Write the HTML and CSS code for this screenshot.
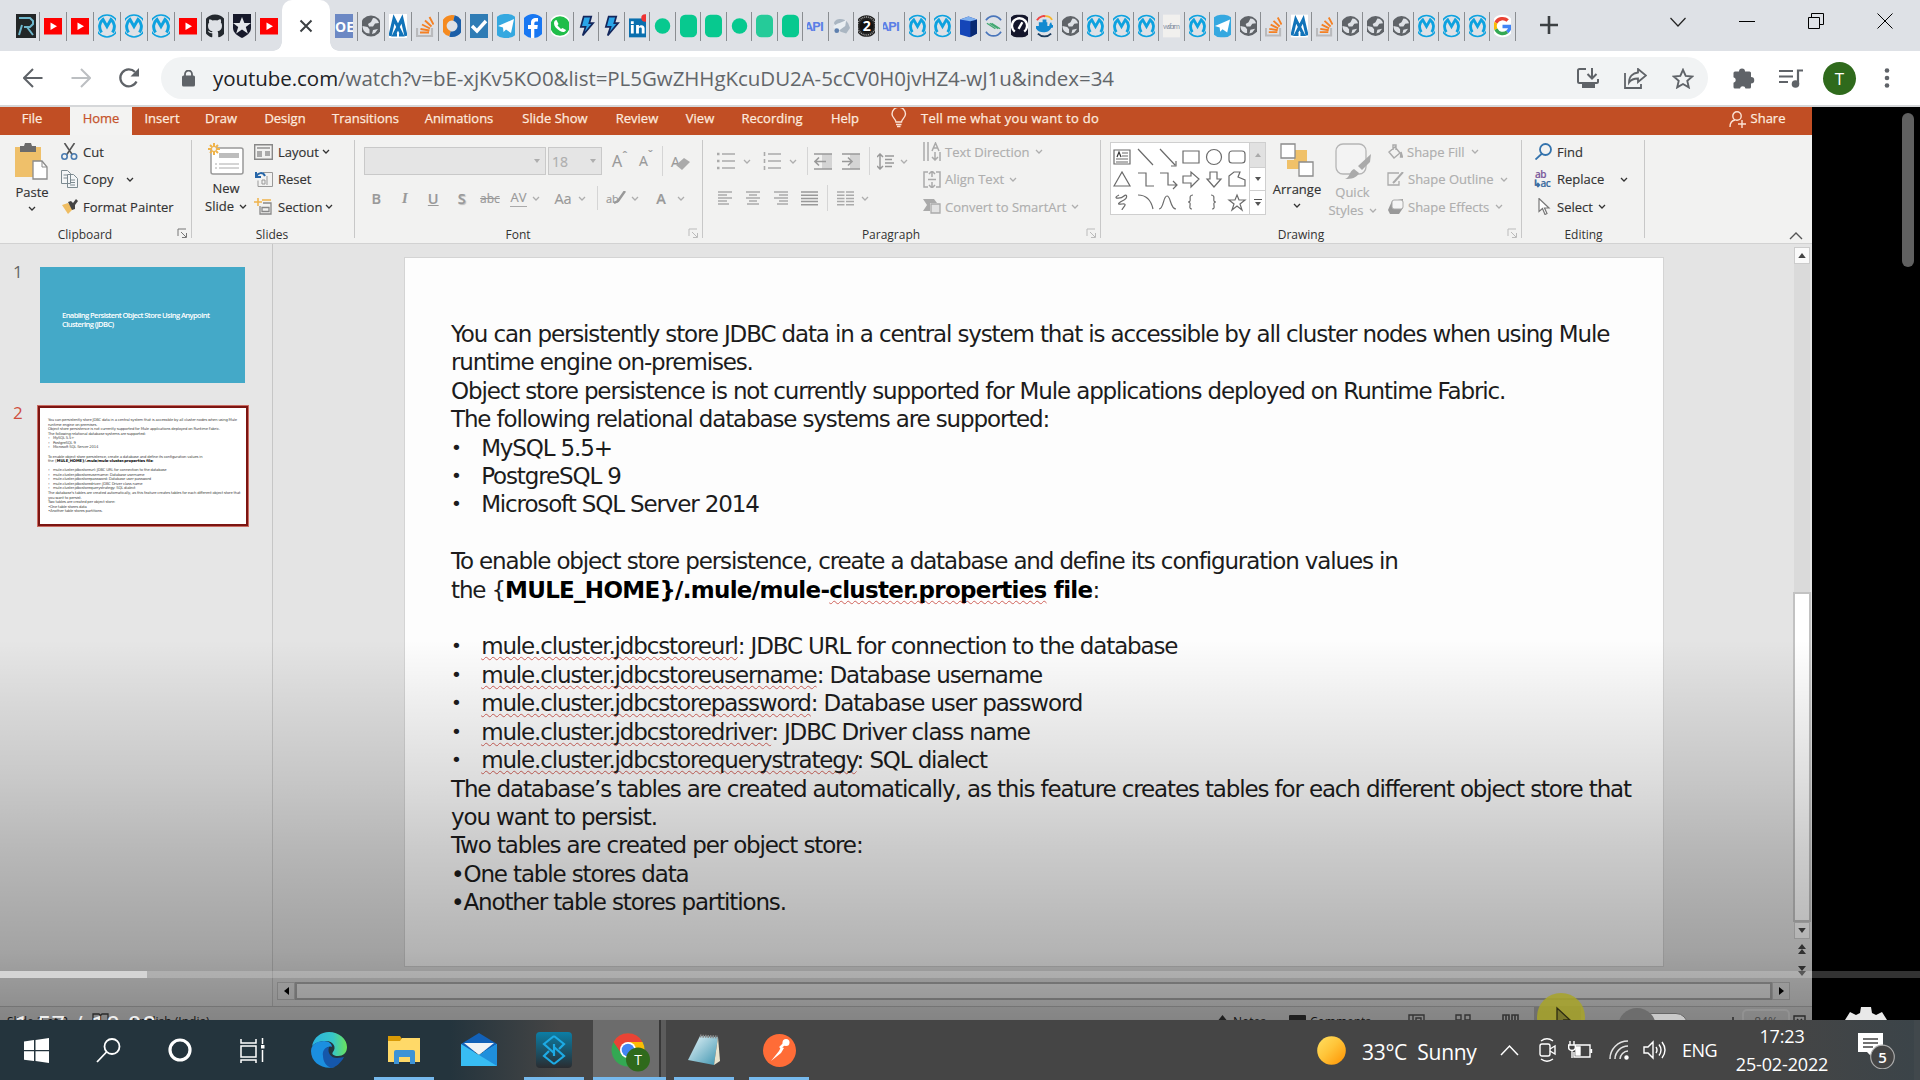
FILE: index.html
```html
<!DOCTYPE html>
<html lang="en">
<head>
<meta charset="utf-8">
<title>youtube.com</title>
<link rel="stylesheet" href="styles.css">
</head>
<body>
<svg class="defs" width="0" height="0">
  <defs>
    <linearGradient id="gEdge" x1="0" y1="0" x2="1" y2="0"><stop offset="0" stop-color="#2bb3e0"/><stop offset=".6" stop-color="#37c6c8"/><stop offset="1" stop-color="#6be35a"/></linearGradient>
    <linearGradient id="gSun" x1="0" y1="0" x2="1" y2="1"><stop offset="0" stop-color="#ffe063"/><stop offset=".45" stop-color="#ffc53a"/><stop offset="1" stop-color="#ff9100"/></linearGradient>
    <linearGradient id="gApp" x1="0" y1="0" x2="0" y2="1"><stop offset="0" stop-color="#0b7ea6"/><stop offset="1" stop-color="#2a2c30"/></linearGradient>
    <linearGradient id="gPad" x1="0" y1="0" x2="1" y2="1"><stop offset="0" stop-color="#e8f6fa"/><stop offset="1" stop-color="#3f95b0"/></linearGradient>
    <g id="rr"><path fill="#222627" d="M2 0h20v24H2z"/><path d="M5 4h11l3 3v3l-3 3h-6M13 13l6 8M5 21l3-10" fill="none" stroke="#6fb7cc" stroke-width="2"/></g>
    <g id="yt"><rect x="1" y="4" width="22" height="16.500" rx="2" fill="#f00"/><path fill="#fff" d="M9.500 8.500v7.500l6.500-3.700z"/></g>
    <g id="mu" fill="none" stroke="#0ea2df"><circle cx="12" cy="12" r="11" stroke-width="1.600"/><path stroke-width="3" d="M6.500 18.500C3.500 14 4.200 8.500 8 5.500l4 7 4-7c3.800 3 4.500 8.500 1.500 13"/></g>
    <g id="gh"><path fill="#24292f" d="M12 .5C5.500.500.500 5.700.500 12.200c0 5.200 3.300 9.500 8 11 .7.100.8-.3.800-.7v-3.300c-2.300.4-3.700-.6-4.300-2.400 1.700.2 2.100 1.500 3.200 1.500.7 0 1.100-.3 1.300-1C6.500 16.800 5 15 5 11.700c0-1.300.4-2.300 1.200-3.100-.4-1-.3-2.500.2-3.400 1.300 0 2.600.8 3.300 1.300 1.500-.4 3.100-.4 4.600 0 .9-.6 2-1.300 3.300-1.300.5 1 .6 2.400.2 3.400.8.800 1.200 1.800 1.200 3.100 0 3.300-1.600 5.100-4.500 5.600.5.500.7 1.200.7 2.200v3c0 .4.200.8.800.7 4.700-1.500 8-5.800 8-11C24 5.700 18.500.500 12 .5z"/></g>
    <g id="au"><path fill="#16192a" d="M3 0h18v14c0 5-5 8-9 10-4-2-9-5-9-10z"/><path fill="#e3e6ea" d="M12 3l2.400 6H21l-5.200 4 2 6.500L12 15.500 6.200 19.500l2-6.500L3 9h6.600z"/></g>
    <g id="oe"><path fill="#6c88c4" d="M0 0h24v24H0z"/><text x="3" y="17.500" font-family="Open Sans" font-weight="700" font-size="14" fill="#fff">OE</text></g>
    <g id="gl"><circle cx="12" cy="12" r="10.500" fill="#5f6368"/><path fill="#dee1e6" d="M14 4c3 0 5 2 6 5l-4 .5-2 3h-4l-1-2.500 3-2zM3.500 12l5 1 2 2.500v4C6 19.500 3.500 16 3.500 12zM14 16l5-1-3 4-3 1z"/></g>
    <g id="mm"><path fill="#fff" d="M2 0h20v24H2z"/><path fill="none" stroke="#1173b9" stroke-width="3.200" d="M4 22L8 5l8 16h-3M20 22L16 5 8 21h3"/></g>
    <g id="so" fill="none"><path d="M4 14v8h15v-8" stroke="#b9babd" stroke-width="2.200"/><path d="M7 18.500h9M7.500 15l9 1.500M9 10.500l8 4M12 6.500l6.500 6M16.500 3l4 7.500" stroke="#f48024" stroke-width="1.900"/></g>
    <g id="sw" fill="none" stroke-width="5.500"><path d="M14 4A8 8 0 0 0 10 19.700" stroke="#f58a1f"/><path d="M10 20A8 8 0 0 0 14 4" stroke="#1c5fa8"/></g>
    <g id="ck"><path fill="#2f7cb5" d="M0 0h24v24H0z"/><path d="M5 12l5 5 9-10" fill="none" stroke="#fff" stroke-width="3.400"/></g>
    <g id="tg"><rect width="24" height="24" rx="10" fill="#35a8e0"/><path fill="#fff" d="M4 12L20 5l-3 14-5-3.500-2.500 2.500-.5-4.500z"/></g>
    <g id="fb"><circle cx="12" cy="12" r="12" fill="#1877f2"/><path fill="#fff" d="M10 24v-9H7v-4h3V9c0-4 2-5.500 7-5v3.500h-2c-1.500 0-1.700.7-1.700 3.500h3.500l-.5 4h-3v9z"/></g>
    <g id="wa"><circle cx="12" cy="12" r="10.500" fill="#1fbd49" stroke="#fff" stroke-width="1.500"/><path fill="#fff" d="M8.500 6l2 4-1 1.500 3.500 3.500 1.500-1 3.500 2c-1 2.500-3.500 2.500-6 1-3.500-2-6-5-6-7.500 0-2 1-3.500 2.500-3.500z"/></g>
    <g id="bo"><path fill="#2aa5e8" stroke="#14275c" stroke-width="1.800" d="M9 2h8l-2 7h4L8 22l3-9H6z"/></g>
    <g id="li"><path fill="#0a6fae" d="M0 4h22v20H0z"/><path fill="#fff" d="M5 11h3v9H5zM5 7h3v3H5zM10.500 11h3v1.500c2-2.500 6-1.500 6 2V20h-3v-5c0-2-3-2-3 0v5h-3z"/><circle cx="20" cy="3.500" r="4" fill="#e33"/></g>
    <g id="gd"><circle cx="12" cy="12" r="8.200" fill="#07c98f"/></g>
    <g id="gb"><rect x="3" width="18" height="24" rx="5.500" fill="#07c98f"/></g>
    <g id="gc"><rect x="3" width="18" height="24" rx="5.500" fill="#25cb99"/></g>
    <g id="ap"><text x="0" y="17" font-family="Roboto" font-weight="700" font-size="14" textLength="21" fill="#5b7fe6">API</text></g>
    <g id="cl"><path fill="#aab6c2" d="M4 9c1-6 12-6 15 0l2 5-4 6-6-2z"/><path fill="#e9eef2" d="M3 13c4-5 10-4 14-8l-1 7-7 5z"/><circle cx="7" cy="17" r="2.500" fill="#5d7fae"/></g>
    <g id="tw"><circle cx="12" cy="12" r="11.500" fill="#222"/><circle cx="12" cy="12" r="9.500" fill="none" stroke="#aaa" stroke-width="1.500" stroke-dasharray="1 1"/><circle cx="12" cy="12" r="7" fill="#111"/><text x="8" y="17.500" font-family="Open Sans" font-weight="700" font-size="15" fill="#fff">2</text></g>
    <g id="cu"><path fill="#1546b8" d="M3 5l9-3 9 3v15l-8 4-10-3z"/><path fill="#0a2a72" d="M14 7l7-2v15l-7 4z"/><path fill="#7fb0ee" d="M3 5l9-3 9 3-7 2z"/></g>
    <g id="sc" fill="none" stroke-width="1.800"><path stroke="#4a76bb" d="M4 6C8 0 16 0 20 6M4 18c4 6 12 6 16 0"/><path stroke="#42a871" stroke-width="1.300" d="M5 9l9 6M10 9l9 6M8 9l9 6"/></g>
    <g id="sp"><rect x="1" width="22" height="24" rx="8" fill="#14162b"/><path d="M7 18a8 8 0 1 1 10 0M11 15l4-7" fill="none" stroke="#fff" stroke-width="2.500"/></g>
    <g id="dk"><path d="M4 6C7 1 12 1 13 2" stroke="#e44" stroke-width="2" fill="none"/><path d="M13 1.500c4 0 6 2 7 4" stroke="#f8b62b" stroke-width="2" fill="none"/><path fill="#1389d0" d="M2 12h15c0-3 2-4 2-4l1 3h3c-1 3-3 3-4 3-2 6-15 7-17-2zM6 8h9v4H6zM10 5h4v3h-4z"/><path d="M5 20c4 4 10 4 14 0" stroke="#1b3b5c" stroke-width="2" fill="none"/></g>
    <g id="ws"><path fill="#f1f0ee" d="M3 0h18v24H3z"/><text x="3" y="15" font-family="Lato" font-size="8" textLength="18" fill="#8b96a8">wsform</text></g>
    <g id="gg"><circle cx="12" cy="12" r="12" fill="#fff"/><g fill="none" stroke-width="3.600"><path stroke="#ea4335" d="M5 8.500A8 8 0 0 1 17.500 6.300"/><path stroke="#fbbc05" d="M5 15.500a8 8 0 0 1 0-7"/><path stroke="#34a853" d="M17 18.300A8 8 0 0 1 5 15.500"/><path stroke="#4285f4" d="M12 12.500h8a8 8 0 0 1-3 5.800"/></g></g>
    <g id="chev"><path d="M1 1l3 3 3-3" fill="none" stroke="currentColor" stroke-width="1.300"/></g>
    <g id="launch" fill="none" stroke="currentColor"><path d="M1 8V1h8M4 4l5 5M9.500 5v4.500H5"/></g>
  </defs>
</svg>

<header class="tabstrip">
  <div class="tabs lead">
    <i><svg viewBox="2 0 20 24"><use href="#rr"/></svg></i><i><svg viewBox="3 0 18 24"><use href="#yt"/></svg></i><i><svg viewBox="3 0 18 24"><use href="#yt"/></svg></i><i><svg viewBox="3 0 18 24"><use href="#mu"/></svg></i><i><svg viewBox="3 0 18 24"><use href="#mu"/></svg></i><i><svg viewBox="3 0 18 24"><use href="#mu"/></svg></i><i><svg viewBox="3 0 18 24"><use href="#yt"/></svg></i><i><svg viewBox="3 0 18 24"><use href="#gh"/></svg></i><i><svg viewBox="3 0 18 24"><use href="#au"/></svg></i><i class="plain"><svg viewBox="3 0 18 24"><use href="#yt"/></svg></i>
  </div>
  <div class="active"><svg width="14" height="14" viewBox="0 0 14 14"><path d="M1.500 1.500l11 11M12.500 1.500l-11 11" stroke="#3c4043" stroke-width="2"/></svg></div>
  <div class="tabs mid">
    <i><svg viewBox="3 0 18 24"><use href="#oe"/></svg></i><i><svg viewBox="3 0 18 24"><use href="#gl"/></svg></i><i><svg viewBox="3 0 18 24"><use href="#mm"/></svg></i><i><svg viewBox="3 0 18 24"><use href="#so"/></svg></i><i><svg viewBox="3 0 18 24"><use href="#sw"/></svg></i><i><svg viewBox="3 0 18 24"><use href="#ck"/></svg></i><i><svg viewBox="3 0 18 24"><use href="#tg"/></svg></i><i><svg viewBox="3 0 18 24"><use href="#fb"/></svg></i><i><svg viewBox="3 0 18 24"><use href="#wa"/></svg></i>
  </div>
  <div class="tabs tail">
    <i><svg viewBox="3 0 18 24"><use href="#bo"/></svg></i><i><svg viewBox="3 0 18 24"><use href="#bo"/></svg></i><i><svg viewBox="3 0 18 24"><use href="#li"/></svg></i><i><svg viewBox="3 0 18 24"><use href="#gd"/></svg></i><i><svg viewBox="3 0 18 24"><use href="#gb"/></svg></i><i><svg viewBox="3 0 18 24"><use href="#gb"/></svg></i><i><svg viewBox="3 0 18 24"><use href="#gd"/></svg></i><i><svg viewBox="3 0 18 24"><use href="#gc"/></svg></i><i><svg viewBox="3 0 18 24"><use href="#gb"/></svg></i><i><svg viewBox="3 0 18 24"><use href="#ap"/></svg></i><i><svg viewBox="3 0 18 24"><use href="#cl"/></svg></i><i><svg viewBox="3 0 18 24"><use href="#tw"/></svg></i><i><svg viewBox="3 0 18 24"><use href="#ap"/></svg></i><i><svg viewBox="3 0 18 24"><use href="#mu"/></svg></i><i><svg viewBox="3 0 18 24"><use href="#mu"/></svg></i><i><svg viewBox="3 0 18 24"><use href="#cu"/></svg></i><i><svg viewBox="3 0 18 24"><use href="#sc"/></svg></i><i><svg viewBox="3 0 18 24"><use href="#sp"/></svg></i><i><svg viewBox="3 0 18 24"><use href="#dk"/></svg></i><i><svg viewBox="3 0 18 24"><use href="#gl"/></svg></i><i><svg viewBox="3 0 18 24"><use href="#mu"/></svg></i><i><svg viewBox="3 0 18 24"><use href="#mu"/></svg></i><i><svg viewBox="3 0 18 24"><use href="#mu"/></svg></i><i><svg viewBox="3 0 18 24"><use href="#ws"/></svg></i><i><svg viewBox="3 0 18 24"><use href="#mu"/></svg></i><i><svg viewBox="3 0 18 24"><use href="#tg"/></svg></i><i><svg viewBox="3 0 18 24"><use href="#gl"/></svg></i><i><svg viewBox="3 0 18 24"><use href="#so"/></svg></i><i><svg viewBox="3 0 18 24"><use href="#mm"/></svg></i><i><svg viewBox="3 0 18 24"><use href="#so"/></svg></i><i><svg viewBox="3 0 18 24"><use href="#gl"/></svg></i><i><svg viewBox="3 0 18 24"><use href="#gl"/></svg></i><i><svg viewBox="3 0 18 24"><use href="#gl"/></svg></i><i><svg viewBox="3 0 18 24"><use href="#mu"/></svg></i><i><svg viewBox="3 0 18 24"><use href="#mu"/></svg></i><i><svg viewBox="3 0 18 24"><use href="#mu"/></svg></i><i><svg viewBox="3 0 18 24"><use href="#gg"/></svg></i>
  </div>
  <svg class="plus" width="18" height="18" viewBox="0 0 18 18"><path d="M9 0v18M0 9h18" stroke="#3c4043" stroke-width="2.600"/></svg>
  <div class="winbtns">
    <svg width="16" height="10" viewBox="0 0 16 10"><path d="M.500 1L8 9l7.500-8" fill="none" stroke="#222" stroke-width="1.200"/></svg>
    <svg width="16" height="16" viewBox="0 0 16 16"><path d="M0 8.500h16" stroke="#000"/></svg>
    <svg width="16" height="16" viewBox="0 0 16 16" fill="none" stroke="#000"><path d="M.500 4.500h11v11H.500zM3.500 4.500v-4h12v11h-4"/></svg>
    <svg width="16" height="16" viewBox="0 0 16 16"><path d="M.500.500l15 15M15.500.500l-15 15" stroke="#000"/></svg>
  </div>
</header>

<nav class="toolbar">
  <svg width="20" height="20" viewBox="0 0 20 20" fill="none" stroke="#5f6368" stroke-width="2"><path d="M19.500 10H1.500M10 1L1 10l9 9"/></svg>
  <svg width="20" height="20" viewBox="0 0 20 20" fill="none" stroke="#bcbfc2" stroke-width="2"><path d="M.500 10h18M10 1l9 9-9 9"/></svg>
  <svg width="22" height="22" viewBox="0 0 22 22"><path d="M18.500 14.500A8.500 8.500 0 1 1 17 5" fill="none" stroke="#5f6368" stroke-width="2.300"/><path d="M21 1v8.500h-8.500z" fill="#5f6368"/></svg>
  <div class="omnibox">
    <svg width="13" height="17" viewBox="0 0 13 17"><rect y="5.500" width="13" height="11" rx="1.500" fill="#5f6368"/><path d="M3 7V4a3.500 3.500 0 0 1 7 0v3" fill="none" stroke="#5f6368" stroke-width="1.800"/></svg>
    <span class="url"><b>youtube.com</b>/watch?v=bE-xjKv5KO0&amp;list=PL5GwZHHgKcuDU2A-5cCV0H0jvHZ4-wJ1u&amp;index=34</span>
    <div class="omni-actions">
      <svg width="22" height="20" viewBox="0 0 22 20" fill="none" stroke="#5f6368" stroke-width="2"><path d="M9 1H2.500Q1 1 1 2.500v11Q1 15 2.500 15h17q1.500 0 1.500-1.500V11M15 0v9M10.500 6l4.500 4.500L19.500 6"/><path d="M5 15h13v5H5z" fill="#5f6368" stroke="none"/></svg>
      <svg width="23" height="21" viewBox="0 0 23 21" fill="none" stroke="#5f6368" stroke-width="1.800"><path d="M1 5v15h16v-4M14 1l8 6.500-8 6.500v-3.500c-4 0-7 1-9 4 0-6 4-9.500 9-10z"/></svg>
      <svg width="22" height="21" viewBox="0 0 22 21" fill="none" stroke="#5f6368" stroke-width="1.900"><path d="M11 1.800l2.700 6.100 6.600.6-5 4.400 1.500 6.500-5.800-3.400-5.800 3.400 1.500-6.500-5-4.400 6.600-.6z"/></svg>
    </div>
  </div>
  <div class="ext">
    <svg width="22" height="22" viewBox="0 0 22 22" fill="#5f6368"><path d="M6 4.500a3 3 0 0 1 6 0h4.500q1.500 0 1.500 1.500v4a3 3 0 0 1 0 6.500V20q0 1.500-1.500 1.500h-4a2.800 2.800 0 0 0-5.500 0H2Q.500 21.500.500 20v-4.300a2.800 2.800 0 0 0 0-5.500V6Q.500 4.500 2 4.500z"/></svg>
    <svg width="24" height="19" viewBox="0 0 24 19"><path d="M0 2h14M0 7.500h14M0 13h9M19 15V1.500h5" fill="none" stroke="#5f6368" stroke-width="2.200"/><circle cx="16.500" cy="15" r="3.800" fill="#5f6368"/></svg>
    <span class="avatar">T</span>
    <svg width="6" height="20" viewBox="0 0 6 20" fill="#5f6368"><circle cx="3" cy="2.500" r="2.300"/><circle cx="3" cy="10" r="2.300"/><circle cx="3" cy="17.500" r="2.300"/></svg>
  </div>
</nav>

<main class="stage">
  <section class="ppt">
    <div class="menu">
      <span class="file">File</span><span class="home">Home</span><span>Insert</span><span>Draw</span><span>Design</span><span>Transitions</span><span>Animations</span><span>Slide Show</span><span>Review</span><span>View</span><span>Recording</span><span>Help</span>
      <svg class="bulb" width="16" height="20" viewBox="0 0 16 20" fill="none" stroke="#fbe3d6" stroke-width="1.400"><path d="M5 14c0-3-4-4-4-8a6.500 6.500 0 0 1 13.500 0c0 4-4 5-4 8zM5 16.500h5.500M6 18.500h3.500"/></svg>
      <span class="tell">Tell me what you want to do</span>
      <svg class="person" width="17" height="17" viewBox="0 0 17 17" fill="none" stroke="#fbe3d6" stroke-width="1.400"><circle cx="8" cy="5" r="4.200"/><path d="M1 16c0-4 2-6.500 5-7M13 9v8M9 13h8"/></svg>
      <span class="share">Share</span>
    </div>

    <div class="ribbon">
      <div class="group g-clip">
        <div class="body">
          <div class="big">
            <svg width="36" height="37" viewBox="0 0 36 37"><path fill="#efc06a" d="M1 4h26v30H1z"/><path fill="#6b6b6b" d="M6 3h4l1-3h6l1 3h4v6H6z"/><path fill="#fff" stroke="#8b8b8b" stroke-width="1.300" d="M19 18h9l5 6v12H19z"/><path fill="none" stroke="#8b8b8b" d="M28 18v6h5"/></svg>
            <span>Paste</span><svg class="chev" viewBox="0 0 8 5"><use href="#chev"/></svg>
          </div>
          <div class="rows">
            <div><svg width="17" height="17" viewBox="0 0 17 17" fill="none" stroke-width="1.600"><path stroke="#555" d="M3.500 0l8 12M13.500 0l-8 12"/><circle cx="3.500" cy="13.500" r="2.700" stroke="#4a7bb0"/><circle cx="13" cy="13.500" r="2.700" stroke="#4a7bb0"/></svg><span>Cut</span></div>
            <div><svg width="17" height="18" viewBox="0 0 17 18" fill="#f4f6f7" stroke="#7c8a90"><path d="M.500.500h6l3 3v10h-9zM2.500 5h4M2.500 8h4M6.500 4.500h6l4 4v9h-10zM9 10h5M9 12.500h5M9 15h5"/></svg><span>Copy</span><svg class="chev far" viewBox="0 0 8 5"><use href="#chev"/></svg></div>
            <div><svg width="17" height="15" viewBox="0 0 17 15"><path fill="#efbd62" d="M1 6l6-2 5 6-5 5z"/><path fill="#444" d="M7 3l3-1 2 2 3-4 2 2-3 4v4l-3 1z"/></svg><span>Format Painter</span></div>
          </div>
        </div>
        <div class="cap">Clipboard</div><svg class="launch" viewBox="0 0 10 10"><use href="#launch"/></svg>
      </div>

      <div class="group g-slides">
        <div class="body">
          <div class="big">
            <svg width="36" height="33" viewBox="0 0 36 33"><rect x="3" y="5" width="32" height="26" rx="2" fill="#fff" stroke="#999" stroke-width="1.500"/><path fill="#bdbdbd" d="M11 10h20v5H11z"/><path stroke="#aaa" d="M7 21h2M11 21h20M7 25h2M11 25h20"/><path stroke="#efb34a" stroke-width="2" d="M6 0v12M0 6h12M2 2l8 8M10 2l-8 8"/><circle cx="6" cy="6" r="2" fill="#f4f4f4"/></svg>
            <span>New</span><span class="tight">Slide <svg class="chev" viewBox="0 0 8 5"><use href="#chev"/></svg></span>
          </div>
          <div class="rows">
            <div><svg width="19" height="16" viewBox="0 0 19 16" fill="none" stroke="#888"><path stroke-width="1.400" d="M.700.700h17.600v14.600H.700z"/><path fill="#aaa" stroke="none" d="M3 3h13v2H3zM3 7h5v6H3zM11 7h5v5h-5z"/></svg><span>Layout</span><svg class="chev" viewBox="0 0 8 5"><use href="#chev"/></svg></div>
            <div><svg width="19" height="16" viewBox="0 0 19 16" fill="none"><path stroke="#999" d="M9 1.500h9.500v14H4v-6M8 9h3v4H8zM13 5v9"/><path stroke="#2766a8" stroke-width="2" d="M2 1v5h5M2 6c2-5 7-5 9-1"/></svg><span>Reset</span></div>
            <div><svg width="19" height="17" viewBox="0 0 19 17" fill="none"><path stroke="#efb34a" stroke-width="1.500" d="M4 0v8M0 4h8M8 2h9"/><path stroke="#888" stroke-width="1.300" d="M6 8v8h11V5H9M8 9.500h7v4H8z"/></svg><span>Section</span><svg class="chev" viewBox="0 0 8 5"><use href="#chev"/></svg></div>
          </div>
        </div>
        <div class="cap">Slides</div>
      </div>

      <div class="group g-font dim">
        <div class="line one">
          <span class="combo"><svg class="tri" viewBox="0 0 6 4"><path d="M0 0h6L3 4z"/></svg></span>
          <span class="combo size">18<svg class="tri" viewBox="0 0 6 4"><path d="M0 0h6L3 4z"/></svg></span>
          <span class="aa">A<sup>ˆ</sup></span><span class="aa small">A<sup>ˇ</sup></span><span class="bar"></span>
          <span class="erase">A<svg width="14" height="12" viewBox="0 0 14 12"><path fill="#aaa" d="M0 7l8-7 6 4-8 8z"/></svg></span>
        </div>
        <div class="line two">
          <b>B</b><b class="it">I</b><b class="un">U</b><b class="sh">S</b><span class="st">abc</span><span class="av">AV</span><svg class="chev" viewBox="0 0 8 5"><use href="#chev"/></svg><span class="case">Aa</span><svg class="chev" viewBox="0 0 8 5"><use href="#chev"/></svg><span class="bar"></span><span class="hl">ab<svg width="14" height="14" viewBox="0 0 14 14"><path fill="none" stroke="#999" stroke-width="2.500" d="M13 0L6 10l-4 2"/></svg></span><svg class="chev" viewBox="0 0 8 5"><use href="#chev"/></svg><b class="col">A</b><svg class="chev" viewBox="0 0 8 5"><use href="#chev"/></svg>
        </div>
        <div class="cap">Font</div><svg class="launch" viewBox="0 0 10 10"><use href="#launch"/></svg>
      </div>

      <div class="group g-para dim">
        <div class="left">
          <div class="line one">
            <svg width="18" height="18" viewBox="0 0 18 18" stroke="#aaa" stroke-width="1.600"><path d="M5 2h13M5 9h13M5 16h13"/><path stroke-width="2.600" d="M0 2h2.500M0 9h2.500M0 16h2.500"/></svg><svg class="chev" viewBox="0 0 8 5"><use href="#chev"/></svg>
            <svg width="18" height="18" viewBox="0 0 18 18" stroke="#aaa" stroke-width="1.600"><path d="M5 2h13M5 9h13M5 16h13M1.500 0v4M1.500 7v4M1.500 14v4"/></svg><svg class="chev" viewBox="0 0 8 5"><use href="#chev"/></svg>
            <span class="bar"></span>
            <svg width="18" height="17" viewBox="0 0 18 17" fill="none"><path fill="#d4d4d4" d="M8 1h10v15H8z"/><path stroke="#999" stroke-width="1.600" d="M0 1h18M0 16h18M12 8.500H1M5 4.500l-4 4 4 4"/></svg>
            <svg width="18" height="17" viewBox="0 0 18 17" fill="none"><path fill="#d4d4d4" d="M8 1h10v15H8z"/><path stroke="#999" stroke-width="1.600" d="M0 1h18M0 16h18M0 8.500h9M6 4.500l4 4-4 4"/></svg>
            <span class="bar"></span>
            <svg width="17" height="17" viewBox="0 0 17 17" fill="none" stroke="#999" stroke-width="1.500"><path d="M3 1v15M0 4l3-3 3 3M0 13l3 3 3-3M8 3h9M8 6.500h7M8 10h9M8 13.500h7"/></svg><svg class="chev" viewBox="0 0 8 5"><use href="#chev"/></svg>
          </div>
          <div class="line two">
            <svg width="16" height="14" viewBox="0 0 16 14" stroke="#aaa" stroke-width="1.500"><path d="M1 1h14M1 4h9M1 7h14M1 10h9M1 13h11"/></svg>
            <svg width="16" height="14" viewBox="0 0 16 14" stroke="#aaa" stroke-width="1.500"><path d="M1 1h14M4 4h8M1 7h14M4 10h8M2 13h12"/></svg>
            <svg width="16" height="14" viewBox="0 0 16 14" stroke="#aaa" stroke-width="1.500"><path d="M1 1h14M6 4h9M1 7h14M6 10h9M4 13h11"/></svg>
            <svg width="17" height="15" viewBox="0 0 17 15" stroke="#999" stroke-width="1.500"><path d="M0 1h17M0 4.200h17M0 7.400h17M0 10.600h17M0 13.800h17"/></svg>
            <span class="bar"></span>
            <svg width="17" height="15" viewBox="0 0 17 15" stroke="#aaa" stroke-width="1.500"><path d="M0 1h7.500M9 1h8M0 4.200h7.500M9 4.200h8M0 7.400h7.500M9 7.400h8M0 10.600h7.500M9 10.600h8M0 13.800h7.500M9 13.800h8"/></svg>
            <svg class="chev" viewBox="0 0 8 5"><use href="#chev"/></svg>
          </div>
        </div>
        <div class="rows">
          <div><svg width="18" height="19" viewBox="0 0 18 19" fill="none" stroke="#aaa" stroke-width="1.500"><path d="M1 0v19M5 0v19M12 10v8M9 15l3 3 3-3M9 9l3.500-8L16 9M10.500 6h4M17 10v9"/></svg><span>Text Direction</span><svg class="chev" viewBox="0 0 8 5"><use href="#chev"/></svg></div>
          <div><svg width="18" height="17" viewBox="0 0 18 17" fill="none" stroke="#aaa" stroke-width="1.500"><path d="M5 1H1v15h4M13 1h4v15h-4M9 0v6M9 11v6M6 3l3-3 3 3M6 14l3 3 3-3M5 8.500h8"/></svg><span>Align Text</span><svg class="chev" viewBox="0 0 8 5"><use href="#chev"/></svg></div>
          <div><svg width="18" height="15" viewBox="0 0 18 15"><path fill="#aaa" d="M0 0h11l3 4H7v8H0l4-6z"/><path fill="#e2e2e2" stroke="#aaa" stroke-width="1.300" d="M8 5h9v9H8z"/></svg><span>Convert to SmartArt</span><svg class="chev" viewBox="0 0 8 5"><use href="#chev"/></svg></div>
        </div>
        <div class="cap dark">Paragraph</div><svg class="launch" viewBox="0 0 10 10"><use href="#launch"/></svg>
      </div>

      <div class="group g-draw">
        <div class="body">
          <div class="gallery">
            <svg width="138" height="72" viewBox="0 0 138 72" fill="none" stroke="#6b6b6b" stroke-width="1.200"><path d="M3 7h16v14H3zM11 10h6M11 13h6M5 16h12M5 19h12"/><path d="M6 14l2-5 2 5" stroke="#333"/><path d="M27 6l15 16M49 6l15 16M65 18v5h-5M72 8h16v12H72zM72 7"/><circle cx="103" cy="14" r="7.500"/><rect x="118" y="8" width="16" height="12" rx="3"/><path d="M3 43l8-14 8 14zM27 30h8v13h8M49 30h8v12h9M62 38l4 4-4 4M72 33h8v-4l8 7-8 8v-4h-8zM99 29h7v7h4l-7 8-7-8h3zM118 33l5-4h6l-2 5 7 3v6h-16z"/><path d="M8 52c-8 4 2 4 5 1s4 2 0 4-9 5-2 4 0 4 0 6M27 52c8 0 13 5 15 14M48 66c5 0 4-13 8-13s3 13 9 13M82 52c-6 0 0 7-5 7 5 0-1 7 4 7M100 52c6 0 0 7 5 7-5 0 1 7-4 7M126 52l2 5h6l-5 4 2 6-5-4-5 4 2-6-5-4h6z"/></svg>
            <div class="gscroll"><i class="up"><svg class="tri" viewBox="0 0 6 4"><path d="M0 4h6L3 0z"/></svg></i><i><svg class="tri" viewBox="0 0 6 4"><path d="M0 0h6L3 4z"/></svg></i><i><svg width="8" height="8" viewBox="0 0 8 8"><path d="M0 .500h8" stroke="#555"/><path d="M1 3h6L4 7z" fill="#555"/></svg></i></div>
          </div>
          <div class="big arr">
            <svg width="34" height="34" viewBox="0 0 34 34"><path fill="#f0c169" d="M14 7h13v19H7V17h7z"/><path fill="#fff" stroke="#8b8b8b" stroke-width="1.300" d="M1 1h14v14H1zM19 19h14v14H19z"/></svg>
            <span>Arrange</span><svg class="chev" viewBox="0 0 8 5"><use href="#chev"/></svg>
          </div>
          <div class="big qs dim">
            <svg width="36" height="37" viewBox="0 0 36 37"><rect x="1" y="1" width="30" height="30" rx="7" fill="#f3f3f3" stroke="#b5b5b5" stroke-width="1.300"/><path fill="#aaa" d="M36 11l-1 8-8 8-4-4zM10 36c5-1 4-8 9-10l5 4c-2 5-8 6-14 6z"/></svg>
            <span>Quick</span><span class="tight">Styles <svg class="chev" viewBox="0 0 8 5"><use href="#chev"/></svg></span>
          </div>
          <div class="rows dim">
            <div><svg width="16" height="16" viewBox="0 0 16 16" fill="none" stroke="#aaa" stroke-width="1.400"><path d="M2 8l6-5 5 6-6 5zM6 6V1h3v5"/><path fill="#999" d="M14 8l1.500 5h-2z"/></svg><span>Shape Fill</span><svg class="chev" viewBox="0 0 8 5"><use href="#chev"/></svg></div>
            <div><svg width="17" height="14" viewBox="0 0 17 14" fill="none" stroke="#aaa" stroke-width="1.300"><path d="M12 1H1v12h11V9"/><path stroke-width="2" d="M16 0L8 9l-2 2"/></svg><span>Shape Outline</span><svg class="chev" viewBox="0 0 8 5"><use href="#chev"/></svg></div>
            <div><svg width="17" height="15" viewBox="0 0 17 15"><path fill="#999" d="M1 11L5 2l11-2v9l-4 6H3z"/><rect x="5" y="1" width="11" height="9" rx="2" fill="#f5f5f5" stroke="#aaa"/></svg><span>Shape Effects</span><svg class="chev" viewBox="0 0 8 5"><use href="#chev"/></svg></div>
          </div>
        </div>
        <div class="cap">Drawing</div><svg class="launch dim" viewBox="0 0 10 10"><use href="#launch"/></svg>
      </div>

      <div class="group g-edit">
        <div class="body"><div class="rows">
          <div><svg width="17" height="17" viewBox="0 0 17 17" fill="none" stroke="#3473ad" stroke-width="1.800"><circle cx="10.500" cy="6.500" r="5.500"/><path d="M7 10.500L.500 16.500"/></svg><span>Find</span></div>
          <div><span class="abac"><em>ab</em><em>↳ac</em></span><span>Replace</span><svg class="chev far" viewBox="0 0 8 5"><use href="#chev"/></svg></div>
          <div><svg width="17" height="17" viewBox="0 0 17 17" fill="#fff" stroke="#777" stroke-width="1.200"><path d="M4 .500v13l3.500-3 2.500 6 2-1-2.500-5.500H14z"/></svg><span>Select</span><svg class="chev" viewBox="0 0 8 5"><use href="#chev"/></svg></div>
        </div></div>
        <div class="cap">Editing</div>
      </div>
      <svg class="collapse" width="14" height="8" viewBox="0 0 14 8"><path d="M1 7l6-6 6 6" fill="none" stroke="#555" stroke-width="1.400"/></svg>
    </div>

    <div class="work">
      <aside class="thumbs">
        <div class="thumb"><span class="n">1</span><div class="t1">Enabling Persistent Object Store Using Anypoint<br>Clustering (JDBC)</div></div>
        <div class="thumb sel"><span class="n">2</span><div class="t2"><div class="copy">
          <p>You can persistently store JDBC data in a central system that is accessible by all cluster nodes when using Mule</p><p>runtime engine on-premises.</p><p>Object store persistence is not currently supported for Mule applications deployed on Runtime Fabric.</p><p>The following relational database systems are supported:</p><p class="li">MySQL 5.5+</p><p class="li">PostgreSQL 9</p><p class="li">Microsoft SQL Server 2014</p><p>&nbsp;</p><p>To enable object store persistence, create a database and define its configuration values in</p><p>the {<b>MULE_HOME}/.mule/mule-cluster.properties file</b>:</p><p>&nbsp;</p><p class="li">mule.cluster.jdbcstoreurl: JDBC URL for connection to the database</p><p class="li">mule.cluster.jdbcstoreusername: Database username</p><p class="li">mule.cluster.jdbcstorepassword: Database user password</p><p class="li">mule.cluster.jdbcstoredriver: JDBC Driver class name</p><p class="li">mule.cluster.jdbcstorequerystrategy: SQL dialect</p><p>The database’s tables are created automatically, as this feature creates tables for each different object store that</p><p>you want to persist.</p><p>Two tables are created per object store:</p><p>•One table stores data</p><p>•Another table stores partitions.</p>
        </div></div></div>
      </aside>
      <div class="canvas">
        <div class="desk">
          <article class="slide"><div class="copy">
            <p>You can persistently store JDBC data in a central system that is accessible by all cluster nodes when using Mule</p>
            <p>runtime engine on-premises.</p>
            <p>Object store persistence is not currently supported for Mule applications deployed on Runtime Fabric.</p>
            <p>The following relational database systems are supported:</p>
            <p class="li">MySQL 5.5+</p>
            <p class="li">PostgreSQL 9</p>
            <p class="li">Microsoft SQL Server 2014</p>
            <p>&nbsp;</p>
            <p>To enable object store persistence, create a database and define its configuration values in</p>
            <p>the {<b>MULE_HOME}/.mule/mule-<u>cluster.properties</u> file</b>:</p>
            <p>&nbsp;</p>
            <p class="li"><u>mule.cluster.jdbcstoreurl</u>: JDBC URL for connection to the database</p>
            <p class="li"><u>mule.cluster.jdbcstoreusername</u>: Database username</p>
            <p class="li"><u>mule.cluster.jdbcstorepassword</u>: Database user password</p>
            <p class="li"><u>mule.cluster.jdbcstoredriver</u>: JDBC Driver class name</p>
            <p class="li"><u>mule.cluster.jdbcstorequerystrategy</u>: SQL dialect</p>
            <p>The database’s tables are created automatically, as this feature creates tables for each different object store that</p>
            <p>you want to persist.</p>
            <p>Two tables are created per object store:</p>
            <p>•One table stores data</p>
            <p>•Another table stores partitions.</p>
          </div></article>
          <div class="vscroll">
            <i class="btn"><svg class="tri" viewBox="0 0 6 4"><path d="M0 4h6L3 0z"/></svg></i>
            <i class="track"></i><i class="thumbbar"></i>
            <i class="btn"><svg class="tri" viewBox="0 0 6 4"><path d="M0 0h6L3 4z"/></svg></i>
            <svg class="dbl" width="10" height="11" viewBox="0 0 10 11" fill="#444"><path d="M5 0l4 5H1zM5 5l4 5H1z"/></svg>
            <svg class="dbl d2" width="10" height="11" viewBox="0 0 10 11" fill="#444"><path d="M1 1h8L5 6zM1 6h8l-4 5z"/></svg>
          </div>
        </div>
        <div class="hscroll"><i><svg width="5" height="8" viewBox="0 0 5 8"><path d="M5 0v8L0 4z"/></svg></i><i class="rail"></i><i><svg width="5" height="8" viewBox="0 0 5 8"><path d="M0 0v8l5-4z"/></svg></i></div>
      </div>
    </div>
    <div class="status">
      <span class="s1">Slide 2 of 2</span>
      <svg class="book" width="17" height="17" viewBox="0 0 17 17" fill="none" stroke="#444" stroke-width="1.300"><path d="M1 1h6l1.500 1.500L10 1h6v12h-6l-1.500 2L7 13H1zM8.500 2v12"/></svg>
      <span class="s2">English (India)</span>
      <div class="right">
        <svg width="13" height="14" viewBox="0 0 13 14"><path fill="#333" d="M6.500 0l4 5h-8zM0 7h13v1.500H0zM0 11h13v1.500H0z"/></svg><span class="s3">Notes</span>
        <svg width="17" height="14" viewBox="0 0 17 14"><rect width="17" height="12" rx="1" fill="#333"/></svg><span class="s4">Comments</span>
        <svg class="v" width="17" height="16" viewBox="0 0 17 16" fill="none" stroke="#555" stroke-width="1.400"><path d="M1 1h15v13H1zM5 1v13M8 4h5v5H8z"/></svg>
        <svg class="v" width="17" height="16" viewBox="0 0 17 16" fill="none" stroke="#555" stroke-width="1.400"><path d="M1 1h5v5H1zM10 1h5v5h-5zM1 9h5v5H1zM10 9h5v5h-5z"/></svg>
        <svg class="v" width="17" height="16" viewBox="0 0 17 16" fill="none" stroke="#555" stroke-width="1.600"><path d="M1 1h6v13H1zM10 1h6v13h-6zM4 1v13M13 1v13"/></svg>
        <span class="vsel"></span>
        <span class="minus"></span>
        <svg class="pl" width="10" height="10" viewBox="0 0 10 10"><path d="M5 0v10M0 5h10" stroke="#444" stroke-width="1.500"/></svg>
        <span class="pct">84%</span>
        <svg width="13" height="13" viewBox="0 0 13 13" fill="none" stroke="#444" stroke-width="1.400"><path d="M1 1h11v11H1zM4 4l5 5M9 4L4 9"/></svg>
      </div>
    </div>
  </section>

  <div class="shade"></div>
  <svg class="spot" width="50" height="50" viewBox="0 0 50 50"><circle cx="25" cy="25" r="24" fill="#a8a529" opacity=".85"/><path d="M21 16v17l4-4 4 7 3-2-4-6h6z" fill="#77752c" stroke="#2d2c12" stroke-width="1.300"/></svg>
  <div class="progress"><i></i></div>
  <div class="clock">1:57 / 10:00</div>
  <div class="autoplay"></div>
  <svg class="gear" width="44" height="44" viewBox="0 0 44 44"><path fill="#e9e9e9" d="M17 1h10l1 6 4 2 6-3 5 8-5 4v8l5 4-5 8-6-3-4 2-1 6H17l-1-6-4-2-6 3-5-8 5-4v-8l-5-4 5-8 6 3 4-2z"/></svg>
  <div class="pagebar"></div>
</main>

<footer class="taskbar">
  <div class="apps">
    <span class="cell"><svg width="25" height="25" viewBox="0 0 25 25" fill="#fff"><path d="M0 3.500l10-1.400V12H0zM11.500 1.900L25 0v12H11.500zM0 13.300h10v9.800L0 21.700zM11.500 13.300H25V25l-13.500-1.900z"/></svg></span>
    <span class="cell"><svg width="25" height="25" viewBox="0 0 25 25" fill="none" stroke="#fff" stroke-width="1.800"><circle cx="16" cy="8.500" r="7.500"/><path d="M10.500 14L1 24"/></svg></span>
    <span class="cell"><svg width="26" height="26" viewBox="0 0 26 26"><circle cx="13" cy="13" r="10" fill="none" stroke="#fff" stroke-width="3.200"/></svg></span>
    <span class="cell"><svg width="25" height="25" viewBox="0 0 25 25" fill="none" stroke="#fff" stroke-width="1.500"><path d="M1 1v4h15V1M1 8h15v11H1zM1 25v-3h15v3M22.500 0v6M22.500 12v12"/><path fill="#fff" stroke="none" d="M21 7h3.500v3.500H21z"/></svg></span>
    <span class="cell app"><svg width="36" height="36" viewBox="0 0 36 36"><path fill="url(#gEdge)" d="M1 14C3 5 10 0 18 0c10 0 18 7 18 15 0 6-4 9-9 9-4 0-7-2-5-4 4-5 0-11-7-11C9 9 4 11 1 14z"/><path fill="#1b8fe0" d="M0 19C0 12 7 9 13 9c5 0 8 3 8 6-5-2-9 4-8 9 1 6 6 9 11 11C12 38 0 31 0 19z"/><path fill="#1557ab" d="M12 24c-1-5 2-9 6-9-2 6 2 11 8 11 3 0 6-1 7-1-3 6-8 10-13 11-5-2-8-7-8-12z"/></svg></span>
    <span class="cell app run"><svg width="33" height="28" viewBox="0 0 33 28"><path fill="#d99a06" d="M0 0h12l2 3h5v6H0z"/><path fill="#ffd968" d="M0 5h12l2-3h18v24H0z"/><path fill="#3e93d6" d="M6 28V16q0-2 2-2h17q2 0 2 2v12h-5v-7H11v7z"/></svg></span>
    <span class="cell app"><svg width="36" height="34" viewBox="0 0 36 34"><path fill="#1261b8" d="M0 11L18 0l18 11v8H0z"/><path fill="#f1f3f5" d="M3 10h30L18 22z"/><path fill="#38bdf3" d="M0 11l18 11 18-11v22H0z"/><path fill="#1f8fdc" d="M18 22l18 11V11z"/></svg></span>
    <span class="cell app run"><svg width="36" height="36" viewBox="0 0 36 36"><rect width="36" height="36" rx="4" fill="url(#gApp)"/><path d="M18 22V12M18 4l10 8-5 5M18 4L8 12l10 9M18 14v10M18 32l10-8-10-9M18 32L8 24l5-5" fill="none" stroke="#1dabe5" stroke-width="2.200"/></svg></span>
    <span class="cell app run chrome"><svg width="40" height="40" viewBox="0 0 40 40"><circle cx="17" cy="17" r="16.500" fill="#34a853"/><path fill="#ea4335" d="M2.500 9A16.500 16.500 0 0 1 31.500 9H17l-7 11z"/><path fill="#fbbc05" d="M31.500 9a16.500 16.500 0 0 1-14 24.500L24 20 17 9z"/><circle cx="17" cy="17" r="8" fill="#fff"/><circle cx="17" cy="17" r="6.300" fill="#4285f4"/><circle cx="27" cy="26.500" r="12" fill="#2f6a1c"/><text x="27" y="31.500" text-anchor="middle" font-family="Open Sans" font-size="14" fill="#fff">T</text></svg></span>
    <span class="cell app run pad"><svg width="32" height="32" viewBox="0 0 32 32"><path fill="url(#gPad)" d="M12 2l18 1-4 28L0 26z"/><path fill="#e9e3cd" d="M30 3l2 24-6 4z"/><path d="M12 2l18 1" stroke="#888" stroke-width="3" stroke-dasharray="1.500 1"/></svg></span>
    <span class="cell app run"><svg width="33" height="33" viewBox="0 0 33 33"><circle cx="16.500" cy="16.500" r="16.500" fill="#ff6c37"/><path d="M8 27l8-10 2-4 3 1-3 5z" fill="#fff"/><circle cx="23" cy="8.500" r="3.500" fill="#fff"/><path d="M17 14l4-4" stroke="#fff" stroke-width="2.500"/></svg></span>
  </div>
  <div class="tray">
    <svg class="sun" width="29" height="29" viewBox="0 0 29 29"><circle cx="14.500" cy="14.500" r="14.300" fill="url(#gSun)"/></svg>
    <span class="temp">33°C&nbsp; Sunny</span>
    <svg class="t-up" width="19" height="12" viewBox="0 0 19 12"><path d="M1 11l8.500-9L18 11" fill="none" stroke="#fff" stroke-width="1.500"/></svg>
    <svg class="t-meet" width="17" height="24" viewBox="0 0 17 24" fill="none" stroke="#fff" stroke-width="1.400"><rect x="1" y="6" width="10" height="12" rx="2"/><path d="M11 11l5-3v8l-5-3M2 3c4-3 8-3 12 0M2 21c4 3 8 3 12 0"/></svg>
    <svg class="t-bat" width="25" height="18" viewBox="0 0 25 18" fill="none" stroke="#fff" stroke-width="1.400"><path d="M7 4h15v12H6v-5M23.500 8v4M2 0v4M6 0v4M.700 4h6.600v3q0 2-3.300 2.500Q.700 9 .700 7zM4 10v7"/><path fill="#fff" d="M8 6h4v8H8z"/></svg>
    <svg class="t-wifi" width="20" height="20" viewBox="0 0 20 20" fill="none" stroke="#fff" stroke-width="1.500"><path d="M1 19C1 9 9 1 19 1M6 19C6 12 12 6 19 6M11 19c0-4 4-8 8-8" opacity=".85"/><circle cx="17.500" cy="17.500" r="1.500" fill="#fff"/></svg>
    <svg class="t-vol" width="23" height="20" viewBox="0 0 23 20" fill="none" stroke="#fff" stroke-width="1.400"><path d="M1 7h4l5-5v16l-5-5H1zM13 7q2 3 0 6M16 4.500q4 5.500 0 11M19 2q6 8 0 16"/></svg>
    <span class="eng">ENG</span>
    <span class="time"><span>17:23</span><span>25-02-2022</span></span>
    <span class="note"><svg width="38" height="38" viewBox="0 0 38 38"><path fill="#fff" d="M0 2h25v19H14v5l-5-5H0z"/><path d="M5 8h15M5 12h15M5 16h10" stroke="#444" stroke-width="1.500"/><circle cx="24.500" cy="26" r="11.800" fill="#444" stroke="#aaa" stroke-width="1.200"/><text x="24.500" y="31.500" text-anchor="middle" font-family="Open Sans" font-weight="600" font-size="15" fill="#fff">5</text></svg></span>
  </div>
</footer>
</body>
</html>
```
FILE: styles.css
```css
* { box-sizing: border-box; }
body { margin: 0; width: 1920px; height: 1080px; overflow: hidden; background: #000; font-family: "Open Sans", "Noto Sans", sans-serif; color: #333; }
svg { display: block; flex: none; }
.defs { position: absolute; }
i { font-style: normal; }

/* Tab strip */
.tabstrip { display: flex; height: 51px; background: #dee1e6; }
.tabs { display: flex; padding-top: 12px; height: 41px; }
.tabs i { width: 25.460px; height: 29px; border-right: 1.500px solid #8a8d91; padding: 2px 0 0 4px; overflow: hidden; flex: none; }
.tabs svg { width: 17px; height: 24px; }
.lead { width: 282px; padding-left: 12px; }
.lead i, .mid i { width: 27px; }
.lead i:first-child { width: 28px; }
.lead svg, .mid svg { width: 18px; }
.lead i:first-child svg { width: 20px; }
.lead .plain { border: 0; }
.active { width: 48px; height: 51px; background: #fff; border-radius: 10px 10px 0 0; display: flex; align-items: center; justify-content: center; position: relative; }
.active::before, .active::after { content: ""; position: absolute; bottom: 0; width: 9px; height: 9px; }
.active::before { left: -9px; background: radial-gradient(circle at 0 0, transparent 8.500px, #fff 9px); }
.active::after { right: -9px; background: radial-gradient(circle at 100% 0, transparent 8.500px, #fff 9px); }
.mid { padding-left: 1px; }
.plus { margin: 16px 0 0 24px; }
.winbtns { display: flex; gap: 53px; margin-left: auto; padding: 13px 27px 0 0; }
.winbtns svg:first-child { margin-top: 4px; }

/* Toolbar */
.toolbar { height: 56px; background: #fff; border-bottom: 2px solid #d5d7d9; display: flex; align-items: center; padding-left: 23px; }
.toolbar > svg:nth-child(2) { margin-left: 28px; }
.toolbar > svg:nth-child(3) { margin-left: 27px; }
.omnibox { width: 1547px; height: 42px; margin-left: 21px; border-radius: 21px; background: #f1f3f4; display: flex; align-items: center; padding: 0 14px 0 21px; }
.url { margin-left: 18px; font-size: 20.500px; letter-spacing: -.05px; color: #62666a; white-space: nowrap; }
.url b { font-weight: 400; color: #202124; }
.omni-actions { display: flex; gap: 25px; margin-left: auto; align-items: center; }
.ext { display: flex; align-items: center; margin-left: 25px; }
.ext svg:nth-child(2) { margin-left: 24px; }
.avatar { width: 33px; height: 33px; margin: 0 28px 0 20px; border-radius: 50%; background: #2f6a1c; color: #fff; font-size: 17px; display: flex; align-items: center; justify-content: center; }

/* Page */
.stage { position: relative; height: 913px; overflow: hidden; background: #000; }
.ppt { width: 1812px; height: 930px; background: #e4e4e4; font-size: 13px; }
.menu { height: 28px; background: #c14e24; color: #fdeadf; display: flex; align-items: center; line-height: 28px; white-space: nowrap; }
.menu span { text-align: center; flex: none; padding-bottom: 6px; height: 28px; line-height: 22px; -webkit-text-stroke: .25px currentColor; }
.menu .file { width: 70px; padding-right: 6px; }
.menu .home { width: 62px; background: #f3f3f2; color: #c5532c; }
.menu span:nth-child(3) { width: 60px; }
.menu span:nth-child(4) { width: 58px; }
.menu span:nth-child(5) { width: 70px; }
.menu span:nth-child(6) { width: 91px; }
.menu span:nth-child(7) { width: 96px; }
.menu span:nth-child(8) { width: 96px; }
.menu span:nth-child(9) { width: 68px; }
.menu span:nth-child(10) { width: 58px; }
.menu span:nth-child(11) { width: 86px; }
.menu span:nth-child(12) { width: 60px; }
.bulb { margin: -6px 0 0 16px; }
.menu .tell { margin-left: 14px; letter-spacing: .26px; }
.person { margin: -4px 0 0 auto; }
.menu .share { width: 36px; margin: 0 26px 0 4px; }

.ribbon { height: 109px; background: #f2f2f1; border-bottom: 1px solid #d2d2d2; display: flex; white-space: nowrap; }
.ribbon span, .ribbon b { -webkit-text-stroke: .15px currentColor; }
.group { position: relative; height: 108px; }
.group::after { content: ""; position: absolute; right: 0; top: 5px; height: 98px; width: 1px; background: #c8c8c8; }
.body { display: flex; height: 88px; padding-top: 3px; }
.cap { height: 20px; line-height: 23px; text-align: center; font-size: 12px; color: #333; }
.launch { position: absolute; width: 10px; height: 10px; right: 5px; bottom: 5px; color: #777; }
.dim { color: #aeaeae; }
.dim .cap { color: #333; }
.dim .launch, .launch.dim { color: #bbb; }
.chev { width: 8px; height: 5px; display: inline-block; }
.tri { width: 6px; height: 4px; fill: currentColor; }
.rows { display: grid; grid-template-rows: repeat(3, 27.500px); }
.rows > div { display: flex; align-items: center; gap: 5px; }
.rows .chev { margin-left: 0; }
.rows .chev.far { margin-left: 8px; }
.big { display: flex; flex-direction: column; align-items: center; line-height: 18px; padding-top: 5px; }
.big > svg:first-child { margin-bottom: 3px; }
.big .chev { margin-top: 5px; }
.tight { display: flex; gap: 5px; }

.g-clip { width: 192px; }
.g-clip .big { width: 60px; padding-left: 4px; }
.g-clip .rows { padding-left: 1px; }
.g-clip .cap { padding-right: 22px; }
.g-slides { width: 163px; }
.g-slides .big { width: 62px; padding-left: 6px; }
.g-slides .tight { margin-top: 0; }
.g-slides .chev { margin-top: 0; }
.g-slides .rows .chev { margin-left: -2px; }
.g-slides .tight .chev { margin-top: 7px; }
.g-slides .cap { padding-right: 3px; }

.line { display: flex; align-items: center; }
.line.one { height: 28px; margin-top: 12px; }
.line.two { height: 28px; margin-top: 9px; }
.bar { width: 1px; height: 22px; background: #d5d5d5; flex: none; }
.g-font { width: 348px; padding-top: 0; }
.g-font .cap { margin-top: 11px; padding-right: 22px; }
.g-font .line.one { padding-left: 9px; }
.combo { width: 182px; height: 28px; background: #e5e5e5; border: 1px solid #c9c9c9; display: flex; align-items: center; justify-content: flex-end; padding-right: 5px; font-size: 14px; }
.combo.size { width: 54px; margin-left: 2px; justify-content: space-between; padding-left: 3px; }
.aa { font-size: 16px; margin-left: 10px; width: 23px; color: #999; line-height: 1; }
.aa.small { font-size: 14px; margin-left: 4px; }
.aa sup { font-size: 13px; line-height: 0; }
.g-font .one .bar { margin-left: 0; height: 30px; }
.erase { display: flex; margin-left: 8px; font-size: 14px; color: #999; align-items: center; }
.erase svg { margin: 6px 0 0 -4px; }
.g-font .two > b, .g-font .two > span { text-align: center; flex: none; font-size: 14.500px; color: #999; }
.g-font .line.two { padding-left: 7px; }
.g-font .two > b { width: 28.500px; font-weight: 600; }
.it { font-style: italic; font-family: "Liberation Serif", serif; }
.un { text-decoration: underline; }
.sh { text-shadow: 1px 1px 1px #bbb; }
.g-font .two .st { width: 28px; font-size: 12px; text-decoration: line-through; }
.g-font .two .av { width: 17px; font-size: 13px; border-bottom: 1px solid #aaa; line-height: 17px; margin: 0 3px 0 6px; }
.g-font .two .case { width: 26px; margin-left: 8px; }
.g-font .two .chev { margin: 0 2px; }
.g-font .two .bar { margin: 0 0 0 9px; height: 24px; width: 1px; }
.g-font .two .hl { display: flex; width: 23px; margin-left: 8px; font-size: 11px; }
.hl svg { margin-left: -7px; }
.g-font .two .col { width: 28px; margin-left: 6px; }

.g-para { width: 398px; display: grid; grid-template-columns: 220px 1fr; grid-template-rows: 88px 20px; }
.g-para .cap { grid-column: 1 / 3; padding-right: 22px; }
.g-para .one > :nth-child(1) { margin-left: 14px; }
.g-para .one > :nth-child(2) { margin-left: 8px; }
.g-para .one > :nth-child(3) { margin-left: 12px; }
.g-para .one > :nth-child(4) { margin-left: 8px; }
.g-para .one > :nth-child(5) { margin-left: 10px; height: 28px; }
.g-para .one > :nth-child(6) { margin-left: 6px; }
.g-para .one > :nth-child(7) { margin-left: 10px; }
.g-para .one > :nth-child(8) { margin-left: 9px; height: 28px; }
.g-para .one > :nth-child(9) { margin-left: 7px; }
.g-para .one > :nth-child(10) { margin-left: 6px; }
.g-para .left .two { padding-left: 14px; gap: 12px; }
.g-para .two .bar { height: 26px; margin: 0 -3px; }
.g-para .two .chev { margin-left: -5px; }
.g-para .rows, .g-draw .rows { padding-top: 3px; }
.g-para .rows > div { gap: 4px; }
.g-para .rows .chev { margin-left: 1px; }

.g-draw { width: 421px; }
.g-draw .body .rows { padding-top: 0; margin-left: 9px; }
.g-draw .body .rows > div { gap: 4px; }
.g-draw .body .rows .chev { margin-left: 2px; }
.gallery { display: flex; width: 156px; height: 73px; margin: 4px 0 0 9px; background: #fff; border: 1px solid #cfcfcf; }
.gscroll { width: 17px; display: grid; grid-template-rows: 25px 23px 23px; border-left: 1px solid #cfcfcf; }
.gscroll i { display: flex; align-items: center; justify-content: center; border-bottom: 1px solid #cfcfcf; color: #555; }
.gscroll i:last-child { border: 0; }
.gscroll .up { background: #e1e1e1; color: #aaa; }
.arr { width: 60px; margin-left: 1px; }
.arr span { color: #333; }
.qs { width: 51px; }
.qs .tight .chev { margin-top: 7px; }
.g-draw .cap { padding-right: 21px; }
.g-edit { width: 123px; }
.g-edit .rows { padding-left: 13px; }
.g-edit .rows .far { margin-left: 11px; }
.abac { width: 17px; font-size: 10px; line-height: 9px; color: #7b5a9c; display: flex; flex-direction: column; letter-spacing: -.5px; }
.abac em { font-style: normal; font-weight: 600; height: 9px; }
.abac em + em { color: #3b6ba0; margin-left: -2px; }
.collapse { margin: 97px 0 0 144px; }

.work { display: flex; height: 762px; }
.thumbs { width: 273px; border-right: 1px solid #c6c6c6; padding-top: 23px; background: #e6e6e6; }
.thumb { display: flex; height: 116px; padding-left: 13px; }
.n { width: 27px; font-size: 17px; line-height: 10px; color: #666; }
.t1 { width: 205px; height: 116px; background: #44a9c8; color: #fff; font-size: 7.600px; font-weight: 600; line-height: 8.500px; padding: 44px 0 0 22px; letter-spacing: -.6px; white-space: nowrap; }
.sel { margin-top: 22px; height: 122px; }
.sel .n { width: 24px; line-height: 15px; color: #cf4e3d; }
.t2 { width: 212px; height: 122px; background: #fff; border: 3px solid #7c1512; outline: 1px solid #c96b62; outline-offset: -1px; padding: 10px 0 0 8px; }
.copy { font-family: "DejaVu Sans", sans-serif; white-space: nowrap; color: #1c1c1c; letter-spacing: -.0495em; }
.copy p { margin: 0; }
.copy b { color: #000; letter-spacing: -.031em; }
.copy .li { padding-left: 1.310em; position: relative; }
.copy .li::before { content: "•"; position: absolute; left: 0; font-size: .8em; }
.t2 .copy { font-size: 3.750px; line-height: 4.560px; color: #444; }
.copy u { text-decoration: underline wavy #d0625a 1px; text-underline-offset: 2px; text-decoration-skip-ink: none; }

.canvas { width: 1539px; display: flex; flex-direction: column; }
.desk { display: flex; height: 738px; padding: 13px 0 0 131px; }
.slide { width: 1260px; height: 710px; background: #fdfdfd; border: 1px solid #d4d4d4; padding: 62px 0 0 46px; }
.slide .copy { font-size: 23px; line-height: 28.400px; }
.vscroll { width: 18px; margin: -10px 0 0 129px; display: flex; flex-direction: column; align-items: center; }
.vscroll .btn { width: 16px; height: 17px; background: #fafafa; border: 1px solid #ccc; display: flex; align-items: center; justify-content: center; color: #444; }
.vscroll .btn .tri { width: 8px; height: 5px; }
.track { width: 16px; height: 328px; background: #dadada; }
.thumbbar { width: 18px; height: 330px; background: #fff; border: 2px solid #c2c2c2; }
.dbl { margin-top: 5px; }
.d2 { margin-top: 10px; }
.hscroll { display: flex; width: 1513px; height: 18px; margin: 0 0 0 4px; align-items: stretch; }
.hscroll i { width: 18px; background: #e8e8e8; display: flex; align-items: center; justify-content: center; border: 1px solid #c4c4c4; }
.hscroll .rail { flex: 1; background: #f4f4f4; border: 2px solid #b0b0b0; }

.status { height: 30px; display: flex; align-items: center; background: #dcdcdc; border-top: 1px solid #bbb; font-size: 12px; padding-left: 7px; white-space: nowrap; color: #222; }
.s1 { width: 85px; }
.s2 { margin-left: 23px; }
.right { display: flex; align-items: center; margin-left: auto; width: 596px; flex: none; }
.s3 { width: 56px; margin-left: 4px; }
.s4 { width: 98px; margin-left: 4px; }
.v { margin-right: 30px; }
.vsel { width: 47px; height: 30px; background: #b5b5b5; margin-left: -15px; }
.minus { width: 9px; height: 2px; background: #555; margin-left: 19px; }
.pl { margin-left: 119px; }
.pct { width: 48px; height: 26px; line-height: 26px; border: 2px solid #eee; border-radius: 5px; text-align: center; margin: 0 3px 0 4px; color: #777; display: flex; justify-content: center; align-items: center; }

/* Player controls over the video */
.shade { position: absolute; inset: 533px 108px 0 0; background: linear-gradient(rgba(0,0,0,0), rgba(0,0,0,.06) 16%, rgba(0,0,0,.13) 37%, rgba(0,0,0,.2) 55%, rgba(0,0,0,.29) 82%, rgba(0,0,0,.4)); }
.progress { position: absolute; left: 0; right: 0; top: 864px; height: 7px; background: rgba(255,255,255,.2); }
.progress i { display: block; width: 147px; height: 7px; background: rgba(230,230,230,.7); }
.clock { position: absolute; left: 15px; top: 904px; font: 24px/28px Roboto, sans-serif; letter-spacing: 1.200px; color: #eee; white-space: nowrap; }
.spot { position: absolute; left: 1536px; top: 885px; }
.autoplay { position: absolute; left: 1640px; top: 906px; width: 48px; height: 24px; border-radius: 12px; background: #c9c9c9; border: 1px solid #666; }
.autoplay::before { content: ""; position: absolute; left: -23px; top: -6px; width: 38px; height: 38px; border-radius: 50%; background: #6d6d6d; }
.gear { position: absolute; left: 1844px; top: 899px; }
.pagebar { position: absolute; left: 1902px; top: 6px; width: 12px; height: 154px; border-radius: 6px; background: #606060; }

/* Taskbar */
.taskbar { display: flex; height: 60px; background: linear-gradient(90deg, #24343d 0, #24343d 450px, #454545 560px, #454545 1780px, #3b4449 1920px); color: #fff; border-right: 6px solid #41484c; }
.apps { display: flex; }
.cell { width: 72px; height: 60px; display: flex; align-items: center; justify-content: center; }
.app { width: 60px; margin-right: 15px; padding-bottom: 0; }
.app:nth-child(5) { margin-left: 11px; }
.run { box-shadow: inset 0 -3px #76b9ed; }
.apps .run:nth-child(8) { margin-right: 9px; }
.chrome { width: 73px; margin-right: 8px; background: linear-gradient(90deg, #6c6c6c 66px, #383838 66px, #383838 68px, #5c5c5c 68px); }
.chrome svg { margin: 6px 0 0 3px; }
.tray { display: flex; align-items: center; margin-left: auto; font-size: 20px; }
.temp { width: 122px; margin-left: 16px; padding-top: 4px; font-size: 21px; letter-spacing: -.3px; white-space: nowrap; }
.t-up { margin-left: 16px; }
.t-meet { margin-left: 20px; }
.t-bat { margin-left: 12px; }
.t-wifi { margin-left: 16px; }
.t-vol { margin-left: 14px; }
.eng { width: 35px; margin-left: 16px; font-size: 18px; letter-spacing: -.5px; }
.time { display: flex; flex-direction: column; align-items: center; width: 96px; margin-left: 17px; font-size: 18px; line-height: 28px; letter-spacing: -.15px; white-space: nowrap; }
.note { margin: 0 18px 0 28px; }
```
